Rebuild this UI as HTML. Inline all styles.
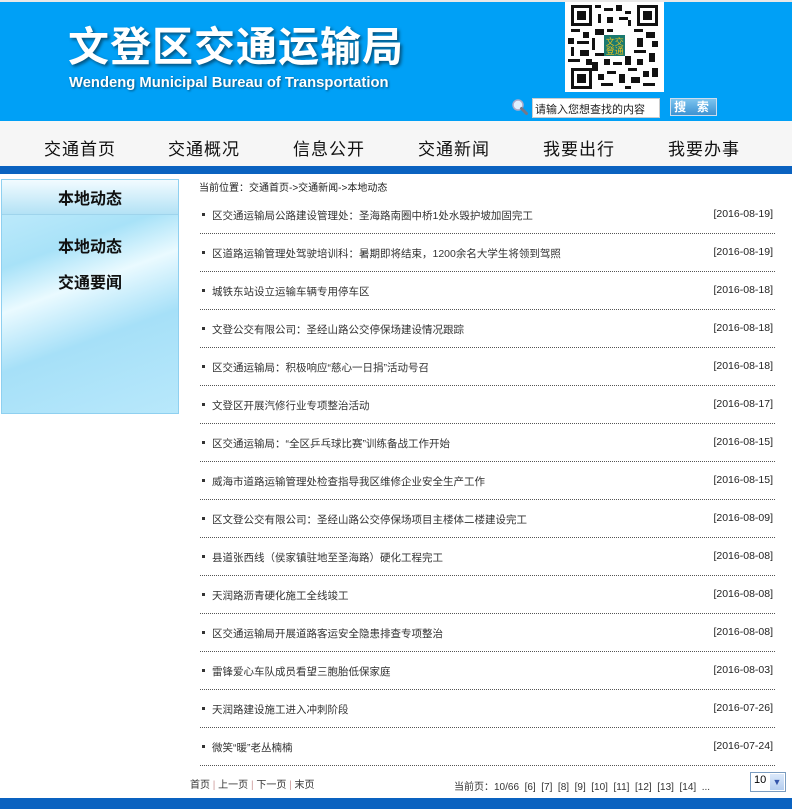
<!DOCTYPE html>
<html><head><meta charset="utf-8"><style>
*{margin:0;padding:0;box-sizing:border-box}
body{width:792px;height:809px;background:#fff;font-family:"Liberation Sans","Noto Sans CJK SC",sans-serif;position:relative;overflow:hidden;color:#333}
.top{position:absolute;left:0;top:0;width:792px;height:2px;background:#e8e8e8}
.banner{position:absolute;left:0;top:2px;width:792px;height:119px;background:#00a0f6}
.title{position:absolute;left:68px;top:13px;font-size:41px;font-weight:bold;color:#fff;letter-spacing:1px;text-shadow:2px 2px 3px #05507a;font-family:"Noto Sans CJK SC",sans-serif}
.sub{position:absolute;left:69px;top:75px;font-size:14.8px;font-weight:bold;color:#fff;text-shadow:1px 1px 2px #05507a;letter-spacing:0}
.qr{position:absolute;left:565px;top:2px;width:99px;height:90px;background:#fff}
.search{position:absolute;left:532px;top:98px;width:128px;height:20px;background:#fff;border:1px solid #ccc;font-size:11px;color:#222;padding:2px 2px;font-family:"Noto Sans CJK SC",sans-serif}
.btn{position:absolute;left:670px;top:98px;width:47px;height:18px;background:linear-gradient(#7cc4ef,#3c92d2);border:1px solid #cde;color:#fff;font-size:12px;text-align:center;line-height:16px;font-weight:bold;letter-spacing:4px;font-family:"Noto Sans CJK SC",sans-serif}
.mag{position:absolute;left:511px;top:98px}
.nav{position:absolute;left:0;top:121px;width:792px;height:45px;background:#f6f6f6}
.nav span{position:absolute;top:14px;font-size:17px;color:#111;font-family:"Noto Sans CJK SC",sans-serif;letter-spacing:1px}
.bar{position:absolute;left:0;top:166px;width:792px;height:8px;background:#0a62c0}
.side{position:absolute;left:1px;top:179px;width:178px;height:235px;border:1px solid #8fd0f0;background:linear-gradient(160deg,#c8eefc 0%,#a8e2f8 30%,#eafaff 45%,#a6e0f8 65%,#b8e8fb 100%)}
.side .h{height:35px;border-bottom:1px solid #9fd4ec;background:linear-gradient(#f2fbff,#b3e2f5);text-align:center;font-size:16px;font-weight:bold;line-height:35px;color:#111;font-family:"Noto Sans CJK SC",sans-serif}
.side .i{text-align:center;font-size:16px;font-weight:bold;color:#111;font-family:"Noto Sans CJK SC",sans-serif;position:absolute;left:0;width:176px}
.crumb{position:absolute;left:199px;top:179px;font-size:10px;color:#222}
.item{position:absolute;left:200px;width:575px;height:38px;border-bottom:1px dotted #555;font-size:10.5px;color:#333}
.item .t{position:absolute;left:12px;top:12px}
.item .t:before{content:"";position:absolute;left:-10px;top:5px;width:3px;height:3px;background:#333}
.item .d{position:absolute;right:2px;top:12px;color:#222}
.pg{position:absolute;top:776px;font-size:10px;color:#333}
.sel{position:absolute;left:750px;top:772px;width:36px;height:20px;border:1px solid #7a9cc0;background:#fff;font-size:11px;padding:1px 3px;color:#000}
.sel i{position:absolute;right:1px;top:1px;width:14px;height:16px;background:linear-gradient(#dbe9fb,#b4cdef);font-style:normal;font-size:9px;color:#35a;text-align:center;line-height:16px}
.foot{position:absolute;left:0;top:798px;width:792px;height:11px;background:#0a62c0}
</style></head><body>
<div class="top"></div>
<div class="banner"></div>
<div class="title">文登区交通运输局</div>
<div class="sub">Wendeng Municipal Bureau of Transportation</div>
<div class="qr"><svg width="99" height="90" viewBox="0 0 33 30">
<rect x="0" y="0" width="33" height="30" fill="#fff"/>
<g fill="#111">
<path d="M2 1h7v7h-7zM3 2v5h5v-5zM4 3h3v3h-3z" fill-rule="evenodd"/>
<path d="M24 1h7v7h-7zM25 2v5h5v-5zM26 3h3v3h-3z" fill-rule="evenodd"/>
<path d="M2 22h7v7h-7zM3 23v5h5v-5zM4 24h3v3h-3z" fill-rule="evenodd"/>
<rect x="10" y="1" width="2" height="1"/><rect x="13" y="2" width="3" height="1"/><rect x="17" y="1" width="2" height="2"/><rect x="20" y="3" width="2" height="1"/><rect x="11" y="4" width="1" height="3"/><rect x="14" y="5" width="2" height="2"/><rect x="18" y="5" width="3" height="1"/><rect x="21" y="6" width="1" height="2"/>
<rect x="2" y="9" width="3" height="1"/><rect x="6" y="10" width="2" height="2"/><rect x="1" y="12" width="2" height="2"/><rect x="4" y="13" width="4" height="1"/><rect x="2" y="15" width="1" height="3"/><rect x="5" y="16" width="3" height="2"/><rect x="1" y="19" width="4" height="1"/><rect x="7" y="19" width="2" height="2"/>
<rect x="10" y="9" width="3" height="2"/><rect x="14" y="9" width="2" height="1"/><rect x="9" y="12" width="1" height="4"/><rect x="10" y="17" width="3" height="1"/><rect x="13" y="19" width="2" height="2"/><rect x="9" y="20" width="2" height="3"/><rect x="16" y="20" width="3" height="1"/><rect x="20" y="18" width="2" height="3"/>
<rect x="23" y="9" width="3" height="1"/><rect x="27" y="10" width="3" height="2"/><rect x="24" y="12" width="2" height="3"/><rect x="29" y="13" width="2" height="2"/><rect x="23" y="16" width="4" height="1"/><rect x="28" y="17" width="2" height="3"/><rect x="24" y="19" width="2" height="2"/>
<rect x="11" y="24" width="2" height="2"/><rect x="14" y="23" width="3" height="1"/><rect x="12" y="27" width="4" height="1"/><rect x="18" y="24" width="2" height="3"/><rect x="21" y="22" width="3" height="1"/><rect x="22" y="25" width="3" height="2"/><rect x="26" y="23" width="2" height="2"/><rect x="29" y="22" width="2" height="3"/><rect x="26" y="27" width="4" height="1"/><rect x="20" y="28" width="2" height="1"/>
</g>
<rect x="13" y="11" width="7" height="7" fill="#1a7a70"/>
<text x="13.6" y="14.3" font-size="3" fill="#e6c020" font-family="Noto Sans CJK SC">文交</text>
<text x="13.6" y="17.3" font-size="3" fill="#e6c020" font-family="Noto Sans CJK SC">登通</text>
</svg></div>
<svg class="mag" width="18" height="18" viewBox="0 0 18 18"><circle cx="7" cy="7" r="5" fill="#dff0ff" stroke="#aac" stroke-width="1.5"/><path d="M10.5 10.5l5 5" stroke="#778" stroke-width="3" stroke-linecap="round"/></svg>
<div class="search">请输入您想查找的内容</div>
<div class="btn">搜 索</div>
<div class="nav">
<span style="left:44px">交通首页</span><span style="left:168px">交通概况</span><span style="left:293px">信息公开</span><span style="left:418px">交通新闻</span><span style="left:543px">我要出行</span><span style="left:668px">我要办事</span>
</div>
<div class="bar"></div>
<div class="side"><div class="h">本地动态</div>
<div class="i" style="top:53px">本地动态</div><div class="i" style="top:89px">交通要闻</div></div>
<div class="crumb">当前位置：交通首页->交通新闻->本地动态</div>

<div class="item" style="top:196px"><span class="t">区交通运输局公路建设管理处：圣海路南圈中桥1处水毁护坡加固完工</span><span class="d">[2016-08-19]</span></div>
<div class="item" style="top:234px"><span class="t">区道路运输管理处驾驶培训科：暑期即将结束，1200余名大学生将领到驾照</span><span class="d">[2016-08-19]</span></div>
<div class="item" style="top:272px"><span class="t">城铁东站设立运输车辆专用停车区</span><span class="d">[2016-08-18]</span></div>
<div class="item" style="top:310px"><span class="t">文登公交有限公司：圣经山路公交停保场建设情况跟踪</span><span class="d">[2016-08-18]</span></div>
<div class="item" style="top:348px"><span class="t">区交通运输局：积极响应“慈心一日捐”活动号召</span><span class="d">[2016-08-18]</span></div>
<div class="item" style="top:386px"><span class="t">文登区开展汽修行业专项整治活动</span><span class="d">[2016-08-17]</span></div>
<div class="item" style="top:424px"><span class="t">区交通运输局：“全区乒乓球比赛”训练备战工作开始</span><span class="d">[2016-08-15]</span></div>
<div class="item" style="top:462px"><span class="t">威海市道路运输管理处检查指导我区维修企业安全生产工作</span><span class="d">[2016-08-15]</span></div>
<div class="item" style="top:500px"><span class="t">区文登公交有限公司：圣经山路公交停保场项目主楼体二楼建设完工</span><span class="d">[2016-08-09]</span></div>
<div class="item" style="top:538px"><span class="t">县道张西线（侯家镇驻地至圣海路）硬化工程完工</span><span class="d">[2016-08-08]</span></div>
<div class="item" style="top:576px"><span class="t">天润路沥青硬化施工全线竣工</span><span class="d">[2016-08-08]</span></div>
<div class="item" style="top:614px"><span class="t">区交通运输局开展道路客运安全隐患排查专项整治</span><span class="d">[2016-08-08]</span></div>
<div class="item" style="top:652px"><span class="t">雷锋爱心车队成员看望三胞胎低保家庭</span><span class="d">[2016-08-03]</span></div>
<div class="item" style="top:690px"><span class="t">天润路建设施工进入冲刺阶段</span><span class="d">[2016-07-26]</span></div>
<div class="item" style="top:728px"><span class="t">微笑“暖”老丛楠楠</span><span class="d">[2016-07-24]</span></div>

<div class="pg" style="left:190px">首页 <span style="color:#c99">|</span> 上一页 <span style="color:#c99">|</span> 下一页 <span style="color:#c99">|</span> 末页</div>
<div class="pg" style="left:454px;top:778px">当前页：10/66 &nbsp;[6] &nbsp;[7] &nbsp;[8] &nbsp;[9] &nbsp;[10] &nbsp;[11] &nbsp;[12] &nbsp;[13] &nbsp;[14] &nbsp;...</div>
<div class="sel">10<i>&#9660;</i></div>
<div class="foot"></div>
</body></html>
